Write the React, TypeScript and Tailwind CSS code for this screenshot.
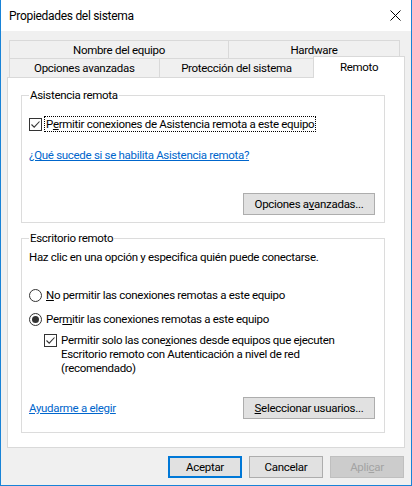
import React from 'react';

const Check = () => (
  <span className="w-[13px] h-[13px] shrink-0 border border-[#333333] bg-white flex items-center justify-center">
    <svg width="11" height="11" viewBox="0 0 11 11">
      <path d="M1.5 5.5 L4.2 8.2 L9.5 2.5" fill="none" stroke="#333333" strokeWidth="1.1" />
    </svg>
  </span>
);

const Radio = ({ on }: { on?: boolean }) => (
  <span className="w-[13px] h-[13px] shrink-0 rounded-full border border-[#333333] bg-white flex items-center justify-center">
    {on && <span className="w-[7px] h-[7px] rounded-full bg-[#333333]" />}
  </span>
);

const Button = ({
  children,
  className = 'border border-[#adadad] bg-[#e1e1e1] text-black',
  width = 'w-[74px]',
}: {
  children: React.ReactNode;
  className?: string;
  width?: string;
}) => (
  <button type="button" className={`h-[22px] flex items-center justify-center ${width} ${className}`}>
    {children}
  </button>
);

const App = () => {
  return (
    <div className="w-[412px] h-[486px] flex flex-col bg-[#f0f0f0] border-x border-b border-[#1883d7] text-[11.5px] tracking-[-0.3px] leading-[16px] text-black font-['Roboto',sans-serif]">
      {/* Title bar */}
      <div className="h-[31px] shrink-0 bg-white flex items-center justify-between pl-[8px] pr-[10px]">
        <span className="text-[12px]">Propiedades del sistema</span>
        <svg width="11" height="11" viewBox="0 0 11 11">
          <path d="M0.5 0.5 L10.5 10.5 M10.5 0.5 L0.5 10.5" stroke="#000" strokeWidth="1" />
        </svg>
      </div>

      <div className="flex-1 flex flex-col pt-[9px] px-[6px]">
        {/* Tabs */}
        <div className="flex flex-col pl-[2px]">
          <div className="flex h-[18px]">
            <div className="w-[219px] flex items-center justify-center border-t border-l border-[#d9d9d9]">
              Nombre del equipo
            </div>
            <div className="w-[172px] flex items-center justify-center border-t border-l border-r border-[#d9d9d9]">
              Hardware
            </div>
          </div>
          <div className="flex h-[19px] items-end">
            <div className="w-[150px] h-[19px] flex items-center justify-center border-t border-l border-[#d9d9d9]">
              Opciones avanzadas
            </div>
            <div className="w-[155px] h-[19px] flex items-center justify-center border-t border-l border-[#d9d9d9]">
              Protección del sistema
            </div>
            <div className="relative z-10 w-[92px] h-[22px] -mb-[1px] flex items-start justify-center pt-[2px] bg-white border-t border-l border-r border-[#d9d9d9]">
              Remoto
            </div>
          </div>
        </div>

        {/* Panel */}
        <div className="h-[371px] bg-white border border-[#d9d9d9] pt-[9px] pl-[13px] pr-[19px] flex flex-col">
          <fieldset className="h-[136px] border border-[#dcdcdc] pl-[7px] pr-[9px] flex flex-col">
            <legend className="px-[1px]">Asistencia remota</legend>
            <div className="mt-[13px] flex items-center gap-[2px]">
              <Check />
              <span className="border border-dotted border-black px-[1px] leading-[14px]">
                P<span className="underline">e</span>rmitir conexiones de Asistencia remota a este equipo
              </span>
            </div>
            <a className="mt-[15px] text-[#0066cc] underline self-start">
              ¿Qué sucede si se habilita Asistencia remota?
            </a>
            <div className="mt-[30px] flex justify-end">
              <Button width="w-[132px]">
                Opciones a<span className="underline">v</span>anzadas...
              </Button>
            </div>
          </fieldset>

          <fieldset className="mt-[7px] h-[203px] border border-[#dcdcdc] pl-[7px] pr-[9px] flex flex-col">
            <legend className="px-[1px]">Escritorio remoto</legend>
            <div className="mt-[3px]">Haz clic en una opción y especifica quién puede conectarse.</div>
            <div className="mt-[22px] flex items-center gap-[4px]">
              <Radio />
              <span>
                <span className="underline">N</span>o permitir las conexiones remotas a este equipo
              </span>
            </div>
            <div className="mt-[8px] flex items-center gap-[4px]">
              <Radio on />
              <span>
                Per<span className="underline">m</span>itir las conexiones remotas a este equipo
              </span>
            </div>
            <div className="mt-[6px] pl-[15px] flex items-start gap-[4px]">
              <span className="mt-[1px]">
                <Check />
              </span>
              <span className="leading-[14px] whitespace-nowrap">
                Permitir solo las cone<span className="underline">x</span>iones desde equipos que ejecuten
                <br />
                Escritorio remoto con Autenticación a nivel de red
                <br />
                (recomendado)
              </span>
            </div>
            <div className="mt-[22px] flex items-center justify-between">
              <a className="text-[#0066cc] underline">Ayudarme a elegir</a>
              <Button width="w-[132px]">
                <span className="underline">S</span>eleccionar usuarios...
              </Button>
            </div>
          </fieldset>
        </div>

        {/* Dialog buttons */}
        <div className="mt-[8px] flex justify-end gap-[7px] pr-[1px]">
          <Button className="border-2 border-[#0078d7] bg-[#e1e1e1] text-black">Aceptar</Button>
          <Button>Cancelar</Button>
          <Button className="border border-[#bfbfbf] bg-[#cccccc] text-[#a3a3a3]">
            Apli<span className="underline">c</span>ar
          </Button>
        </div>
      </div>
    </div>
  );
};

export default App;
